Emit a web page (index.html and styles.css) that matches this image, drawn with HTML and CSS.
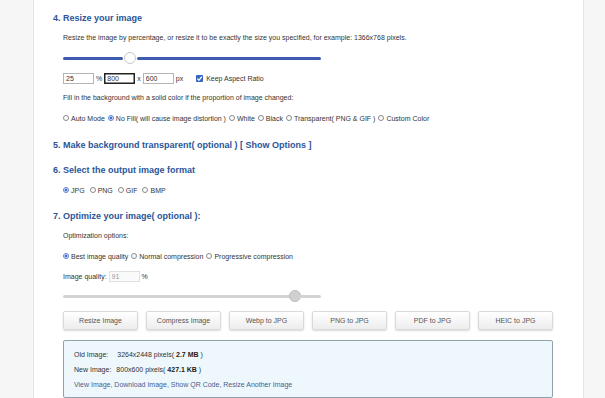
FILE: index.html
```html
<!DOCTYPE html>
<html lang="en">
<head>
	<meta charset="UTF-8">
	<title>Resize your image</title>
	<link rel="stylesheet" href="styles.css">
</head>
<body>
	<div class="card">

		<!-- 4. Resize -->
		<h2 class="step">4. Resize your image</h2>
		<div class="indent">
			<p class="note">Resize the image by percentage, or resize it to be exactly the size you specified, for example: 1366x768 pixels.</p>
			<div class="slider blue">
				<span class="track" style="width: 60px"></span>
				<span class="thumb"></span>
				<span class="track grow"></span>
			</div>
			<div class="sizes">
				<input type="text" class="field" value="25">
				<span class="unit">%</span>
				<input type="text" class="field focus" value="800">
				<span class="unit">x</span>
				<input type="text" class="field" value="600">
				<span class="unit">px</span>
				<label class="keep"><span class="check"><svg viewBox="0 0 8 8" width="7" height="7"><path d="M1.5 4.2 L3.3 6 L6.6 2" fill="none" stroke="#fff" stroke-width="1.4"/></svg></span>Keep Aspect Ratio</label>
			</div>
			<p class="note">Fill in the background with a solid color if the proportion of image changed:</p>
			<div class="options">
				<label><span class="radio"></span>Auto Mode</label>
				<label><span class="radio on"></span>No Fill( will cause image distortion )</label>
				<label><span class="radio"></span>White</label>
				<label><span class="radio"></span>Black</label>
				<label><span class="radio"></span>Transparent( PNG &amp; GIF )</label>
				<label><span class="radio"></span>Custom Color</label>
			</div>
		</div>

		<!-- 5. Transparent -->
		<h2 class="step s5">5. Make background transparent( optional ) <a href="#">[ Show Options ]</a></h2>

		<!-- 6. Format -->
		<h2 class="step s6">6. Select the output image format</h2>
		<div class="indent">
			<div class="options wide">
				<label><span class="radio on"></span>JPG</label>
				<label><span class="radio"></span>PNG</label>
				<label><span class="radio"></span>GIF</label>
				<label><span class="radio"></span>BMP</label>
			</div>
		</div>

		<!-- 7. Optimize -->
		<h2 class="step s7">7. Optimize your image( optional ):</h2>
		<div class="indent">
			<p class="note">Optimization options:</p>
			<div class="options">
				<label><span class="radio on"></span>Best image quality</label>
				<label><span class="radio"></span>Normal compression</label>
				<label><span class="radio"></span>Progressive compression</label>
			</div>
			<div class="sizes">
				<span class="label">Image quality:</span>
				<input type="text" class="field dim" value="91">
				<span class="unit">%</span>
			</div>
			<div class="slider gray">
				<span class="track" style="width: 228px"></span>
				<span class="thumb"></span>
				<span class="track grow"></span>
			</div>

			<div class="buttons">
				<button class="btn">Resize Image</button>
				<button class="btn">Compress Image</button>
				<button class="btn">Webp to JPG</button>
				<button class="btn">PNG to JPG</button>
				<button class="btn">PDF to JPG</button>
				<button class="btn">HEIC to JPG</button>
			</div>

			<div class="result">
				<p><span class="key old">Old Image:</span>3264x2448 pixels( <b>2.7 MB</b> )</p>
				<p><span class="key">New Image:</span>800x600 pixels( <b>427.1 KB</b> )</p>
				<p class="links"><a href="#">View Image</a>, <a href="#">Download Image</a>, <a href="#">Show QR Code</a>, <a href="#">Resize Another Image</a></p>
			</div>
		</div>

	</div>
</body>
</html>
```

FILE: styles.css
```css
        body {
            font-family: "Liberation Sans", Arial, sans-serif;
            font-size: 7px;
            margin: 0;
            padding: 0;
            background-color: #f6f6f6;
            color: #333;
        }
        .card {
            margin-left: 33px;
            width: 551px;
            height: 398px;
            box-sizing: border-box;
            background-color: #fff;
            border: 1px solid #e4e4e4;
            border-top: none;
            border-bottom: none;
            padding: 8px 0 0 19px;
        }
        .step {
            margin: 0;
            font-size: 9px;
            line-height: 20px;
            color: #2a5599;
        }
        .step a {
            color: #2a5599;
            text-decoration: none;
        }
        .s5 { margin-top: 7px; }
        .s6 { margin-top: 5px; }
        .s7 { margin-top: 6px; }
        .indent {
            margin-left: 10px;
        }
        .note {
            margin: 0;
            line-height: 20px;
        }

        /* sliders */
        .slider {
            display: flex;
            align-items: center;
            width: 258px;
            height: 20px;
        }
        .slider .track {
            height: 3px;
            border-radius: 2px;
        }
        .slider .grow {
            flex: 1;
        }
        .slider .thumb {
            width: 12px;
            height: 12px;
            border-radius: 50%;
            box-sizing: border-box;
            margin: 0 1px;
        }
        .blue .track {
            background-color: #3d5cb0;
        }
        .blue .thumb {
            background-color: #fff;
            border: 1px solid #c9c9c9;
        }
        .gray .track {
            background-color: #d3d3d3;
        }
        .gray .thumb {
            background-color: #d0d0d0;
            border: 1px solid #bdbdbd;
            margin: 0 -2px;
        }

        /* inputs */
        .sizes {
            display: flex;
            align-items: center;
            height: 20px;
        }
        .field {
            width: 31px;
            height: 11px;
            box-sizing: border-box;
            padding: 0 2px;
            margin: 0;
            border: 1px solid #b5b5b5;
            font-family: inherit;
            font-size: 7px;
            color: #333;
            outline: none;
        }
        .field.focus {
            border: 1px solid #222;
            box-shadow: inset 0 0 0 0.5px #222;
        }
        .field.dim {
            color: #999;
            border-color: #e0e0e0;
            background-color: #fafafa;
        }
        .unit {
            margin: 0 2px;
        }
        .label {
            margin-right: 2px;
        }
        .keep {
            display: flex;
            align-items: center;
            margin-left: 11px;
        }
        .check {
            display: inline-flex;
            width: 7px;
            height: 7px;
            background-color: #3765c4;
            border-radius: 1px;
            margin-right: 3px;
        }

        /* radios */
        .options {
            display: flex;
            align-items: center;
            height: 20px;
            gap: 3px;
        }
        .options.wide {
            gap: 5px;
        }
        .options label {
            display: flex;
            align-items: center;
        }
        .radio {
            display: inline-block;
            width: 6px;
            height: 6px;
            box-sizing: border-box;
            border: 1px solid #8a8a8a;
            border-radius: 50%;
            margin-right: 2px;
            background-color: #fff;
        }
        .radio.on {
            border-color: #5b7fd0;
            background: radial-gradient(circle, #3e6fd8 45%, #fff 60%);
        }

        /* buttons */
        .buttons {
            display: flex;
            gap: 8px;
            margin-top: 5px;
        }
        .btn {
            width: 75px;
            height: 19px;
            padding: 0;
            font-family: inherit;
            font-size: 7px;
            color: #555;
            background: linear-gradient(#fff, #ededed);
            border: 1px solid #dadada;
            border-radius: 2px;
            box-shadow: 0 1px 2px rgba(0, 0, 0, 0.15);
        }

        /* result */
        .result {
            margin-top: 10px;
            width: 490px;
            height: 58px;
            box-sizing: border-box;
            background-color: #eef7fc;
            border: 1px solid #8fa2ac;
            border-radius: 2px;
            padding: 6px 0 0 10px;
        }
        .result p {
            margin: 0;
            line-height: 15px;
        }
        .result b {
            color: #222;
        }
        .key {
            margin-right: 5px;
        }
        .key.old {
            margin-right: 9px;
        }
        .links a {
            color: #4a5d8f;
            text-decoration: none;
        }
        .links {
            color: #4a5d8f;
        }
```
